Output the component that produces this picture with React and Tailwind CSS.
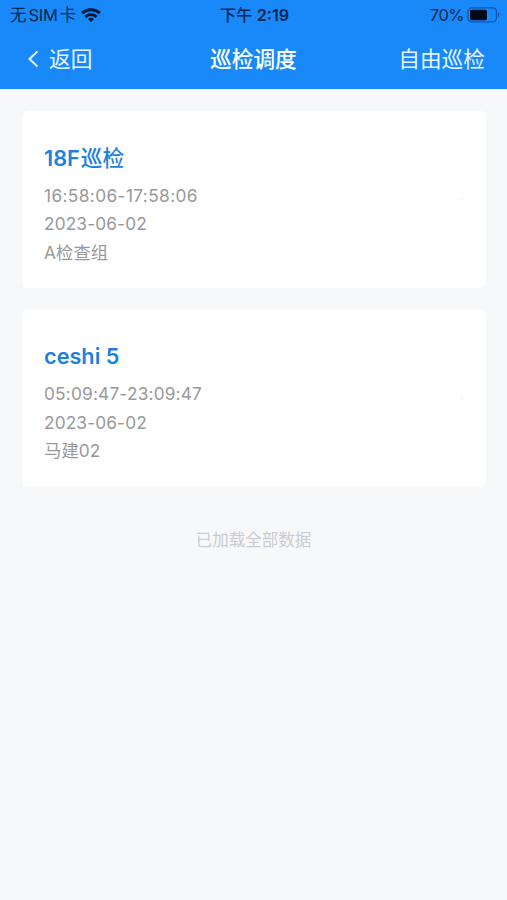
const schedules = [
  { id: 1, name: '18F', suffix: '巡检', time: '16:58:06-17:58:06', date: '2023-06-02', group: 'A检查组', tracking: 'tracking-[0.38px]' },
  { id: 2, name: 'ceshi 5', time: '05:09:47-23:09:47', date: '2023-06-02', group: '马建02', tracking: 'tracking-[0.18px]' },
];

function WifiIcon() {
  return (
    <svg className="w-[20px] h-[14px]" viewBox="0 0 20 14" fill="none" stroke="#041a3c" strokeWidth="3">
      <path d="M1 5.1C6 .5 14 .5 19 5.1" />
      <path d="M4.3 8.8C7.6 5.8 12.4 5.8 15.7 8.8" />
      <path d="M10 14 6.9 11c1.8-1.6 4.4-1.6 6.2 0z" fill="#041a3c" stroke="none" />
    </svg>
  );
}

function BatteryIcon() {
  return (
    <svg className="w-[33px] h-[16px] mb-[1px]" viewBox="0 0 33 16" fill="none">
      <rect x="0.9" y="0.9" width="28.6" height="14" rx="4" stroke="#0d57ae" strokeWidth="1.3" />
      <rect x="3" y="2.8" width="17" height="10.4" rx="1.8" fill="#020a1a" />
      <path d="M31 5.6c1.7.6 1.7 4 0 4.6z" fill="#0d57ae" />
    </svg>
  );
}

function StatusBar() {
  return (
    <div className="relative flex items-center justify-between h-[30px] pl-[10px] pr-[7px] text-[16.5px] text-[#06264f]">
      <div className="flex items-center">
        <span>无</span>
        <span className="ml-[2px] tracking-[-0.3px]">SIM</span>
        <span className="ml-[2px] mr-[5px]">卡</span>
        <WifiIcon />
      </div>
      <span className="absolute left-[220px] text-[16.2px] font-medium whitespace-nowrap">
        下午 <span className="font-semibold">2:19</span>
      </span>
      <div className="flex items-center gap-[3px]">
        <span className="tracking-[-0.5px]">70%</span>
        <BatteryIcon />
      </div>
    </div>
  );
}

function NavBar() {
  return (
    <div className="relative flex items-center justify-between h-[59px] pl-[26px] pr-[22px] text-[21.7px] text-[#e6f5ff]">
      <button className="flex items-center">
        <svg className="w-[12px] h-[18px] mr-[11px]" viewBox="0 0 12 18" fill="none" stroke="currentColor" strokeWidth="2">
          <path d="M11.5 1.4 3.5 9l8 7.6" />
        </svg>
        返回
      </button>
      <h1 className="absolute left-[210px] font-medium text-white">巡检调度</h1>
      <button>自由巡检</button>
    </div>
  );
}

function ScheduleCard({ item }) {
  return (
    <div className="h-[177px] px-[22px] pt-[29.7px] bg-white rounded-md">
      <h2 className="h-[34px] leading-[34px] text-[21.7px] font-semibold text-[#1e7fdc]">
        {item.name}
        {item.suffix && <span className="ml-[1px] font-medium">{item.suffix}</span>}
      </h2>
      <div className="mt-[7px] text-[17.3px] leading-[28.5px] text-[#999]">
        <div className="flex items-center justify-between">
          <span className={item.tracking}>{item.time}</span>
          <span className="w-[2px] h-[3px] mt-[8px] mr-[1px] bg-[#f4f5f6]" />
        </div>
        <p className="tracking-[0.12px]">{item.date}</p>
        <p className="tracking-[0.12px]">{item.group}</p>
      </div>
    </div>
  );
}

export default function App() {
  return (
    <div className="min-h-screen bg-[#f6f8fa] font-[Inter,'Noto_Sans_CJK_SC',sans-serif]">
      <header className="h-[89px] bg-[#1989fa]">
        <StatusBar />
        <NavBar />
      </header>
      <main className="flex flex-col gap-[21.5px] pt-[22px] pl-[22px] pr-[21px]">
        {schedules.map((item) => (
          <ScheduleCard key={item.id} item={item} />
        ))}
      </main>
      <p className="mt-[41.5px] text-center text-[16.5px] leading-[24px] text-[#cbcdcf]">已加载全部数据</p>
    </div>
  );
}
